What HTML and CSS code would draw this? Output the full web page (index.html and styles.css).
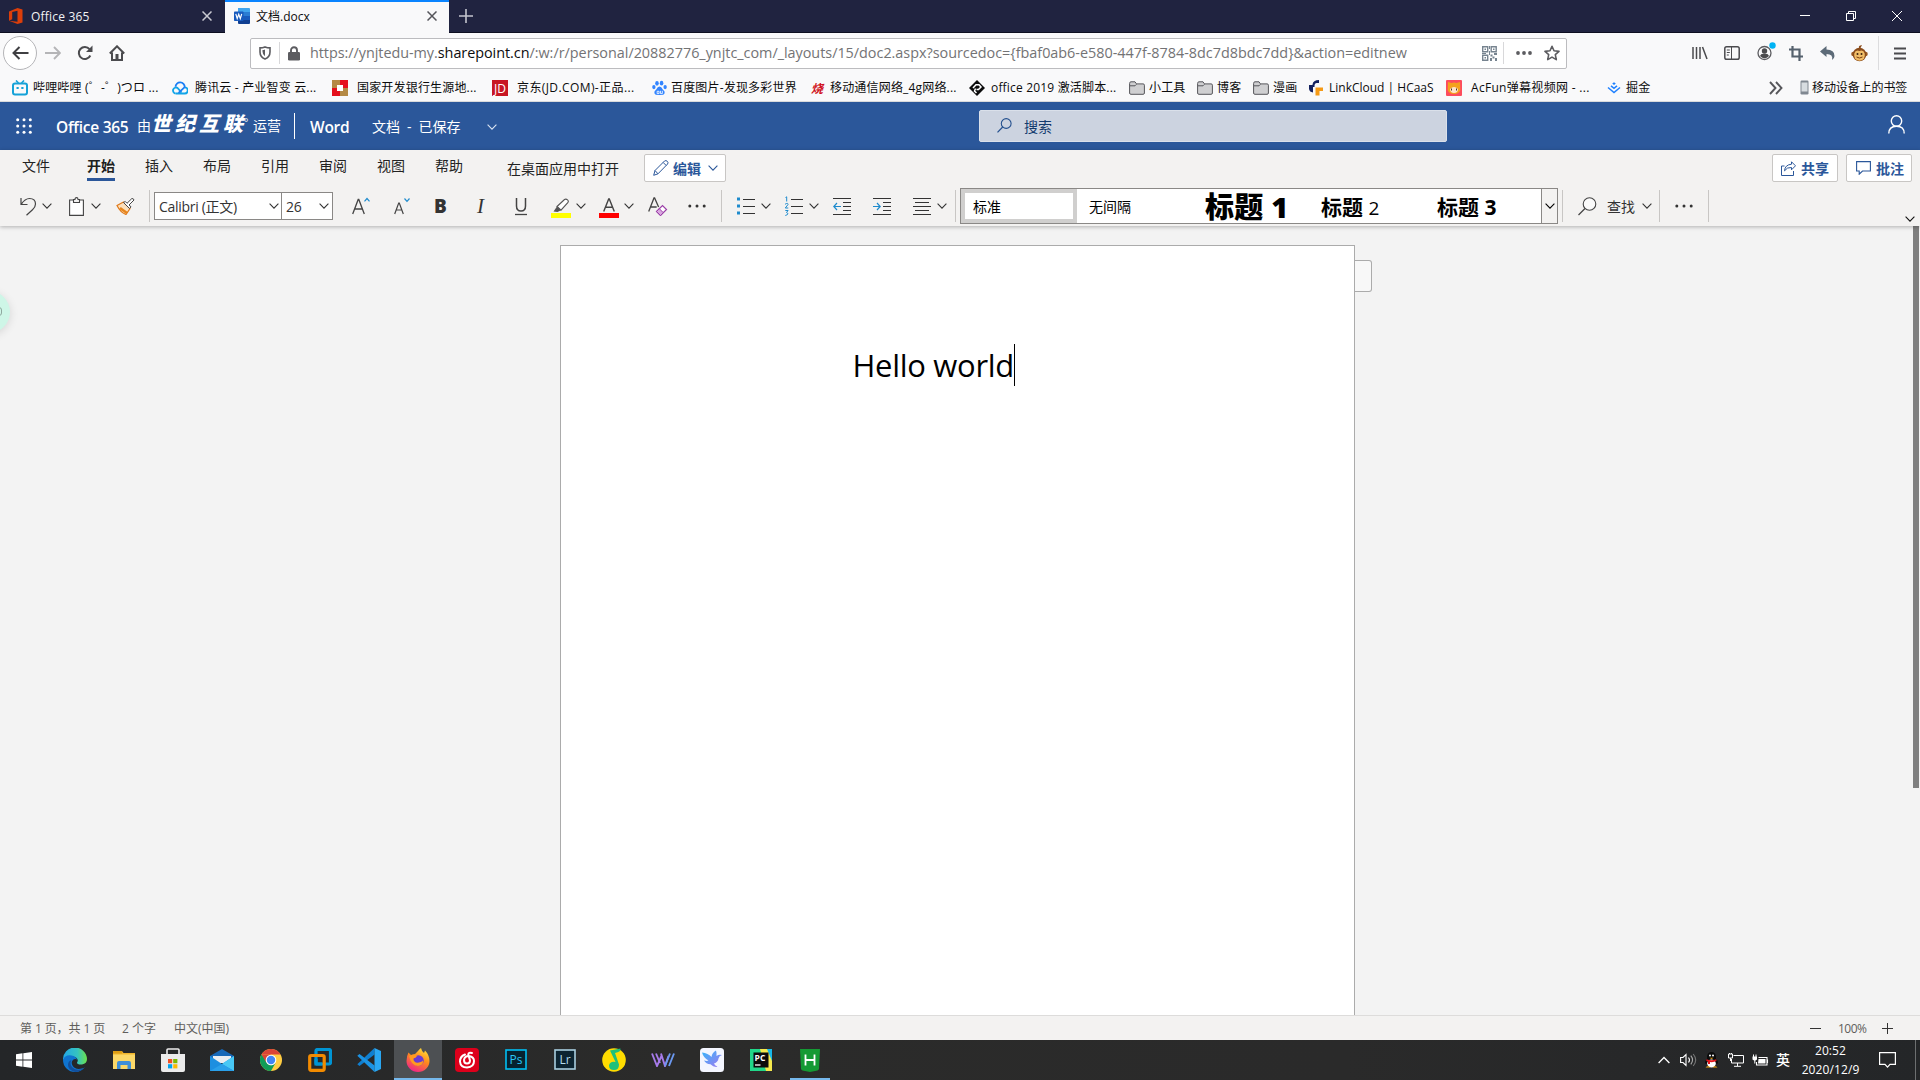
FILE: index.html
```html
<!DOCTYPE html>
<html lang="zh-CN">
<head>
<meta charset="utf-8">
<title>文档.docx</title>
<link rel="stylesheet" href="styles.css">
</head>
<body>
<svg class="defs" width="0" height="0">
  <symbol id="chev" viewBox="0 0 10 6"><path d="M.6.7 5 5.1 9.4.7" fill="none" stroke="currentColor" stroke-width="1.1"/></symbol>
  <symbol id="folder" viewBox="0 0 16 14"><path d="M.6 2.6V12q0 1.3 1.3 1.3h12.200q1.300 0 1.300-1.300V4.200q0-1.300-1.300-1.300H7.500L6 .8H1.900Q.6.800.6 2.600z" fill="#cfcfd1" stroke="#55555a"/><path d="M1 4.800h5l1.500-1.500" fill="none" stroke="#55555a"/></symbol>
  <symbol id="dots" viewBox="0 0 18 4"><circle cx="1.800" cy="2" r="1.500"/><circle cx="9" cy="2" r="1.500"/><circle cx="16.200" cy="2" r="1.500"/></symbol>
  <symbol id="x" viewBox="0 0 10 10"><path d="M.5.500l9 9m0-9-9 9" fill="none" stroke="currentColor" stroke-width="1.500"/></symbol>
</svg>

<header class="tabstrip">
  <div class="tab">
    <svg width="14" height="16" viewBox="0 0 14 16"><path d="M0 3.500 8.500 0 13.500 1.600V14.400L8.500 16 0 12.700 8.500 13.700V2.700L3.200 4v7.200L0 12.700z" fill="#dc3e0a"/></svg>
    <span class="tab-title t-office">Office 365</span>
    <svg class="close" width="10" height="10"><use href="#x"/></svg>
  </div>
  <div class="tab active">
    <svg width="16" height="16" viewBox="0 0 16 16"><path d="M4 0h11q1 0 1 1v3.500H4z" fill="#41a5ee"/><path d="M4 4h12v4H4z" fill="#2b7cd3"/><path d="M4 8h12v4H4z" fill="#185abd"/><path d="M4 12h12v3q0 1-1 1H5q-1 0-1-1z" fill="#103f91"/><rect y="3.500" width="9.500" height="9.500" rx=".8" fill="#185abd"/><path d="M1.800 5.800 3.200 10.600 4.750 6.200 6.300 10.600 7.700 5.800" fill="none" stroke="#fff" stroke-width="1.200"/></svg>
    <span class="tab-title t-doc">文档.docx</span>
    <svg class="close" width="10" height="10"><use href="#x"/></svg>
  </div>
  <svg class="newtab" width="14" height="14" viewBox="0 0 14 14"><path d="M7 0v14M0 7h14" stroke="#c4c5ce" stroke-width="1.600"/></svg>
  <div class="winctl">
    <svg width="10" height="10" viewBox="0 0 10 10"><path d="M0 4.500h10" stroke="#fff"/></svg>
    <svg width="10" height="10" viewBox="0 0 10 10"><path d="M.5 2.500h7v7h-7zM2.500 2.500v-2h7v7h-2" fill="none" stroke="#fff"/></svg>
    <svg width="10" height="10" viewBox="0 0 10 10"><path d="M0 0l10 10M10 0 0 10" stroke="#fff"/></svg>
  </div>
</header>

<nav class="navbar">
  <span class="back"><svg width="17" height="14" viewBox="0 0 17 14"><path d="M1.500 7H16.500M7.500 1 1.500 7l6 6" fill="none" stroke="#3f3f42" stroke-width="2"/></svg></span>
  <svg class="fwd" width="16" height="14" viewBox="0 0 16 14"><path d="M0 7h14.500M9 1l6 6-6 6" fill="none" stroke="#b5b5b7" stroke-width="1.900"/></svg>
  <svg class="reload" width="16" height="16" viewBox="0 0 16 16"><path d="M13.300 10.500A6 6 0 1 1 12.500 4.200" fill="none" stroke="#4b4b4e" stroke-width="2"/><path d="M15.500.500V7H9z" fill="#4b4b4e"/></svg>
  <svg class="home" width="16" height="16" viewBox="0 0 16 16"><path d="M.8 8.500 8 1.300l7.200 7.200M3 7.500V15h10V7.500" fill="none" stroke="#4b4b4e" stroke-width="2"/><path d="M6.500 9h3v6h-3z" fill="#4b4b4e"/></svg>
  <div class="urlbar">
    <svg width="12" height="14" viewBox="0 0 12 14"><path d="M6 .9q-2.500 1-5 1v4Q1 10.800 6 13q5-2.200 5-7.100v-4q-2.500 0-5-1z" fill="none" stroke="#5c5c60" stroke-width="1.600"/><path d="M6 3.500v6.800Q3.500 9 3.500 5.500V4q1.500 0 2.500-.5z" fill="#5c5c60"/></svg>
    <i class="vsep"></i>
    <svg width="12" height="15" viewBox="0 0 12 15"><rect y="6" width="12" height="8.500" rx="1.300" fill="#5c5c60"/><path d="M3 7V4.300a3 3 0 0 1 6 0V7" fill="none" stroke="#5c5c60" stroke-width="1.900"/></svg>
    <span class="url">https://ynjtedu-my.<b>sharepoint.cn</b><span class="path">/:w:/r/personal/20882776_ynjtc_com/_layouts/15/doc2.aspx?sourcedoc={fbaf0ab6-e580-447f-8784-8dc7d8bdc7dd}&amp;action=editnew</span></span>
    <svg class="qr" width="15" height="15" viewBox="0 0 15 15"><path d="M.7.700h5v5h-5zM9.200.700h5v5h-5zM.7 9.200h5v5h-5z" fill="none" stroke="#76838f" stroke-width="1.400"/><path d="M2.500 2.500h1.500v1.500H2.500zM11 2.500h1.500v1.500H11zM2.500 11h1.500v1.500H2.500zM7 0h1v3H7zM7 5h1v4H7zM0 7h4v1H0zM8.500 8.500h2v2h-2zM12 7h3v2h-3zM10.500 10.500h2v2h-2zM13 12h2v3h-2zM8 12h2v3H8z" fill="#76838f"/></svg>
    <i class="vsep"></i>
    <svg class="udots" width="16" height="4" viewBox="0 0 16 4"><g fill="#5c5c60"><circle cx="2" cy="2" r="1.900"/><circle cx="8" cy="2" r="1.900"/><circle cx="14" cy="2" r="1.900"/></g></svg>
    <svg width="16" height="16" viewBox="0 0 16 16"><path d="M8 1.300 10 5.800l5 .6-3.700 3.300 1 4.900L8 12.100l-4.300 2.500 1-4.900L1 6.400l5-.6z" fill="none" stroke="#5c5c60" stroke-width="1.600" stroke-linejoin="round"/></svg>
  </div>
  <div class="exts">
    <svg width="16" height="14" viewBox="0 0 16 14"><path d="M1 1v12M4.500 1v12M8 1v12M10.500 1l4.500 12" stroke="#4b4b4e" stroke-width="1.500"/></svg>
    <svg width="16" height="14" viewBox="0 0 16 14"><rect x=".8" y=".8" width="14.400" height="12.400" rx="1.800" fill="none" stroke="#4b4b4e" stroke-width="1.500"/><path d="M7.500 1v12M2.800 4h3M2.800 6.500h3M2.800 9h2" stroke="#4b4b4e"/></svg>
    <svg width="20" height="20" viewBox="0 0 20 20"><circle cx="7.500" cy="11" r="6.500" fill="none" stroke="#5c5c60" stroke-width="1.300"/><circle cx="7.500" cy="9" r="2.700" fill="#4b4b4e"/><path d="M3 14q1-3 4.500-2.200Q11 11 12 14q-4.500 4.500-9 0z" fill="#4b4b4e"/><circle cx="15.500" cy="3.500" r="3.200" fill="#00b3f4"/></svg>
    <svg width="14" height="15" viewBox="0 0 14 15"><path d="M3.500 0v10.500H14M0 3.500h10.500V15" fill="none" stroke="#55616d" stroke-width="2.200"/></svg>
    <svg width="16" height="14" viewBox="0 0 16 14"><path d="M0 5.500 6.500 0v3.500q8 0 8 6.500 0 2.500-2.500 4 1.500-6-5.500-6v3z" fill="#5d6b78"/></svg>
    <svg width="17" height="17" viewBox="0 0 17 17"><circle cx="2.500" cy="9" r="2.300" fill="#9a5b25"/><circle cx="14.500" cy="9" r="2.300" fill="#9a5b25"/><circle cx="8.500" cy="9.500" r="6.800" fill="#8a4b1a"/><path d="M8 3Q7 .5 11 0l-1.500 3z" fill="#8a4b1a"/><path d="M3.300 8.500Q4.500 4.500 8.500 6q4-1.500 5.200 2.500 1 6.500-5.200 7.200-6.200-.7-5.200-7.200z" fill="#f1bd67"/><circle cx="6.500" cy="9" r="1" fill="#3a220e"/><circle cx="10.500" cy="9" r="1" fill="#3a220e"/><path d="M5.500 12q3 2 6 0" fill="none" stroke="#7a3d12"/></svg>
    <i class="extsep"></i>
    <svg width="12" height="13" viewBox="0 0 12 13"><path d="M0 1.500h12M0 6.500h12M0 11.500h12" stroke="#4b4b4e" stroke-width="2"/></svg>
  </div>
</nav>

<nav class="bookmarks">
  <span class="bm"><svg width="16" height="16" viewBox="0 0 16 16"><path d="M4 .5 6.500 3M12 .5 9.500 3" stroke="#15a2d8" stroke-width="1.600"/><rect x="1" y="3.500" width="14" height="11" rx="2" fill="none" stroke="#15a2d8" stroke-width="2"/><path d="M4.500 8h2.200M9.300 8h2.200" stroke="#15a2d8" stroke-width="2"/></svg><b>哔哩哔哩 (゜-゜)つロ ...</b></span>
  <span class="bm g7"><svg width="16" height="16" viewBox="0 0 16 16"><path d="M4 13.500h8.500a3 3 0 0 0 .3-6.100M3.800 13.500a3 3 0 1 1 1.700-5.600l4 4.500" fill="none" stroke="#12a5e8" stroke-width="1.800"/><path d="M3.500 6.800a4.600 4.600 0 0 1 9.200.4L6.500 12.800" fill="none" stroke="#1b7ef5" stroke-width="1.800"/></svg><b>腾讯云 - 产业智变 云...</b></span>
  <span class="bm g9"><svg width="16" height="16" viewBox="0 0 16 16"><path d="M0 0h8v16H0z" fill="#b58a45"/><path d="M8 0h8v8H8zM0 8h8v8H0z" fill="#e50f1c"/><path d="M8 8h8v8H8z" fill="#b58a45"/><rect x="5" y="5" width="6" height="6" fill="#fff"/></svg><b>国家开发银行生源地...</b></span>
  <span class="bm g9 jd"><svg width="16" height="16" viewBox="0 0 16 16"><rect width="16" height="16" fill="#c81623"/><text x="8" y="12.500" text-anchor="middle" font-size="12" fill="#fff" textLength="12" lengthAdjust="spacingAndGlyphs">JD</text></svg><b>京东(JD.COM)-正品...</b></span>
  <span class="bm g4"><svg width="15" height="16" viewBox="0 0 16 16"><g fill="#3385ff"><ellipse cx="5.300" cy="3" rx="1.900" ry="2.500"/><ellipse cx="10.200" cy="2.800" rx="1.900" ry="2.500"/><ellipse cx="2" cy="7" rx="1.800" ry="2.300"/><ellipse cx="14" cy="7" rx="1.800" ry="2.300"/><path d="M8 6.500q2 0 3.500 3Q14 11 13.500 13.500 12.500 16 8 15.500 3.500 16 2.500 13.500 2 11 4.500 9.500q1.500-3 3.500-3z"/></g><path d="M5.500 11.500h2v2.500h-2zM9 11v3h2v-3" fill="none" stroke="#fff" stroke-width=".9"/></svg><b>百度图片-发现多彩世界</b></span>
  <span class="bm g5"><svg width="14" height="16" viewBox="0 0 14 16"><text x="0" y="12.500" font-size="12" font-style="italic" font-weight="700" fill="#d01020">烧</text></svg><b>移动通信网络_4g网络...</b></span>
  <span class="bm g6"><svg width="16" height="16" viewBox="0 0 16 16"><path d="M8 0l8 8-8 8-8-8z" fill="#0b0b0b"/><path d="M4 8l3-3.300h3L12 7 9.500 9.500H7.500M6.500 8.500l-1 2.500 2 2" fill="none" stroke="#fff" stroke-width="1.500"/></svg><b>office 2019 激活脚本...</b></span>
  <span class="bm g4"><svg width="16" height="14"><use href="#folder"/></svg><b>小工具</b></span>
  <span class="bm g4"><svg width="16" height="14"><use href="#folder"/></svg><b>博客</b></span>
  <span class="bm g4"><svg width="16" height="14"><use href="#folder"/></svg><b>漫画</b></span>
  <span class="bm g6 lc"><svg width="14" height="16" viewBox="0 0 14 16"><path d="M10 0v3H7.500Q5.500 3 5.500 5.500V7H3.500V4.500Q4 0 10 0z" fill="#14215f"/><path d="M0 5h4v7.500Q.5 12 0 9z" fill="#14215f"/><path d="M6.500 7.500H14V11h-3.500v4.500H6.500z" fill="#f59a16"/></svg><b>LinkCloud | HCaaS</b></span>
  <span class="bm g9 ac"><svg width="16" height="16" viewBox="0 0 16 16"><rect width="16" height="16" rx="1" fill="#fd4c5d"/><path d="M2 2l3.500 1q2.500-1 5 0L14 2l.3 8Q13 14 8 14T1.700 10z" fill="#f4a11d"/><path d="M4 9q4-4 8 0 0 4-4 4T4 9z" fill="#ffe5ca"/><path d="M5.500 8.500v2M10.500 8.500v2" stroke="#4b3326"/></svg><b>AcFun弹幕视频网 - ...</b></span>
  <span class="bm g5"><svg width="14" height="12" viewBox="0 0 14 12"><path d="M1 5.500l6 5 6-5M4 3.800l3 2.500 3-2.500" fill="none" stroke="#1e80ff" stroke-width="1.500"/><path d="M7 .2 8.800 1.600 7 3 5.200 1.600z" fill="#1e80ff"/></svg><b>掘金</b></span>
  <svg class="more" width="14" height="14" viewBox="0 0 14 14"><path d="M1 1l5.500 6L1 13M7 1l5.500 6L7 13" fill="none" stroke="#56565a" stroke-width="1.900"/></svg>
  <span class="bm g3"><svg width="9" height="15" viewBox="0 0 9 15"><rect x=".5" y=".5" width="8" height="14" rx="1.200" fill="#808891"/><rect x="1.500" y="2.500" width="6" height="9" fill="#d7dce0"/></svg><b>移动设备上的书签</b></span>
</nav>

<header class="suite">
  <svg class="waffle" width="16" height="16" viewBox="0 0 16 16" fill="#fff"><circle cx="1.700" cy="1.700" r="1.500"/><circle cx="8" cy="1.700" r="1.500"/><circle cx="14.300" cy="1.700" r="1.500"/><circle cx="1.700" cy="8" r="1.500"/><circle cx="8" cy="8" r="1.500"/><circle cx="14.300" cy="8" r="1.500"/><circle cx="1.700" cy="14.300" r="1.500"/><circle cx="8" cy="14.300" r="1.500"/><circle cx="14.300" cy="14.300" r="1.500"/></svg>
  <span class="brand">Office 365</span>
  <span class="by">由</span>
  <span class="vianet">世纪互联</span><span class="reg">°</span>
  <span class="by">运营</span>
  <i class="suitesep"></i>
  <span class="brand">Word</span>
  <span class="docname">文档<em>-</em>已保存</span>
  <svg class="dchev" width="10" height="6"><use href="#chev"/></svg>
  <div class="search">
    <svg width="15" height="15" viewBox="0 0 15 15"><circle cx="9.200" cy="5.500" r="4.900" fill="none" stroke="#24508e" stroke-width="1.100"/><path d="M5.700 9 .5 14.400" stroke="#24508e" stroke-width="1.200"/></svg>
    <span>搜索</span>
  </div>
  <svg class="person" width="17" height="19" viewBox="0 0 17 19"><circle cx="8.500" cy="6" r="5.200" fill="none" stroke="#fff" stroke-width="1.400"/><path d="M.8 18.500q0-7.300 7.700-7.300t7.700 7.300" fill="none" stroke="#fff" stroke-width="1.400"/></svg>
</header>

<section class="ribbon">
  <div class="menus">
    <span>文件</span><span class="on">开始</span><span>插入</span><span>布局</span><span>引用</span><span>审阅</span><span>视图</span><span>帮助</span>
    <span class="desktop">在桌面应用中打开</span>
    <button class="btn edit"><svg width="16" height="16" viewBox="0 0 16 16"><path d="M.7 15.300 2 10.500 11.500 1q1.500-1 2.800.3t.3 2.700L5 13.800zM2 10.500 5 13.800M10.200 2.500l3 3" fill="none" stroke="#2b579a"/></svg><span>编辑</span><svg width="10" height="6"><use href="#chev"/></svg></button>
    <button class="btn share"><svg width="15" height="15" viewBox="0 0 15 15"><path d="M3.500 5H.5v9.500h12V10" fill="none" stroke="#2b579a"/><path d="M10.500.800 14.500 4.800l-4 4V6.500Q6 6 3.500 9.800 4 3.800 10.500 3.200z" fill="none" stroke="#2b579a"/></svg><span>共享</span></button>
    <button class="btn note"><svg width="15" height="14" viewBox="0 0 15 14"><path d="M.6.600h13.800v9.400H6.500L3.200 13.200V10H.6z" fill="none" stroke="#2b579a" stroke-width="1.100"/></svg><span>批注</span></button>
  </div>
  <div class="tools">
    <svg width="17" height="19" viewBox="0 0 17 19"><path d="M1 1v6.500h6.500M1.200 7.300Q5 1.500 9.500 1.500q6 0 6 5.500 0 3-3 5.700L6.500 18.300" fill="none" stroke="#444" stroke-width="1.200"/></svg>
    <svg class="dd" width="10" height="6"><use href="#chev"/></svg>
    <svg width="15" height="19" viewBox="0 0 15 19"><path d="M4.500 3H.6v15.400h13.800V3h-3.900M4.500 4.500V2.500h1.500Q6 .6 7.500.6T9 2.500h1.500v3h-6z" fill="#fff" stroke="#444" stroke-width="1.100"/></svg>
    <svg width="10" height="6"><use href="#chev"/></svg>
    <svg width="19" height="17" viewBox="0 0 19 17"><path d="M1 7.500 7.500 4l6.500 6.500-4 6Q4.500 14.500 1 7.500z" fill="#fbe0bd" stroke="#e0791a" stroke-width="1.200"/><path d="M4 10l7 5" stroke="#e8861c" stroke-width="2.500"/><path d="M7.500 4.500 13.500 10.500 15 8.800 13 7l5-5q-.5-1.800-2.200-1.400L11 5.300 9.300 3.500z" fill="#fff" stroke="#444"/></svg>
    <i class="rsep"></i>
    <div class="fontbox"><span class="fname">Calibri (正文)</span><svg width="10" height="6"><use href="#chev"/></svg><span class="fsize">26</span><svg width="10" height="6"><use href="#chev"/></svg></div>
    <svg class="grow" width="18" height="18" viewBox="0 0 18 18"><path d="M.7 17 6.200 2.500h.6L12.300 17M2.600 12h7.800" fill="none" stroke="#444" stroke-width="1.300"/><path d="M12.500 4.300 15 1.500l2.500 2.800" fill="none" stroke="#1e8bcd" stroke-width="1.200"/></svg>
    <svg class="grow" width="16" height="18" viewBox="0 0 16 18"><path d="M.7 17 4.700 6h.6l4 11M2.200 13h5.600" fill="none" stroke="#444" stroke-width="1.200"/><path d="M10.500 1.500 13 4.300l2.500-2.800" fill="none" stroke="#1e8bcd" stroke-width="1.200"/></svg>
    <span class="ltr bold">B</span>
    <span class="ltr ital">I</span>
    <svg width="12" height="19" viewBox="0 0 12 19"><path d="M1.500 1v8q0 5 4.500 5t4.500-5V1" fill="none" stroke="#444" stroke-width="1.500"/><path d="M0 17.500h12" stroke="#444" stroke-width="1.300"/></svg>
    <svg class="hl" width="20" height="20" viewBox="0 0 20 20"><path d="M0 15h20v5H0z" fill="#ff0"/><path d="M6 8.500 13.500 1.500q1.500-1 3 .3t.3 2.900L10 12.200z" fill="#fff" stroke="#555" stroke-width="1.100"/><path d="M2.500 13.500 6 8.500l4 3.700-3.500 1.800z" fill="#555"/></svg>
    <svg width="10" height="6"><use href="#chev"/></svg>
    <svg class="hl" width="20" height="20" viewBox="0 0 20 20"><path d="M0 15h20v5H0z" fill="#f00"/><path d="M4.700 13.500 9.700 1h.6l5 12.500M6.500 9.300h7" fill="none" stroke="#444" stroke-width="1.400"/></svg>
    <svg width="10" height="6"><use href="#chev"/></svg>
    <svg width="20" height="20" viewBox="0 0 20 20"><path d="M.7 15.500 6 2h.6l4 9M2.700 11h6" fill="none" stroke="#444" stroke-width="1.300"/><path d="M8.500 15.500 14.500 9.500l4 4-6 6z" fill="#fff" stroke="#9b3fa8" stroke-width="1.200"/><path d="M8.500 15.500l2.800-2.800 4 4-2.800 2.800z" fill="#d9a7df" stroke="#9b3fa8"/></svg>
    <svg width="18" height="4" fill="#333"><use href="#dots"/></svg>
    <i class="rsep"></i>
    <svg width="18" height="18" viewBox="0 0 18 18"><path d="M0 .5h3v3H0zM0 7.500h3v3H0zM0 14.500h3v3H0z" fill="#1e8bcd"/><path d="M6 2.500h12M6 9.500h12M6 16.500h12" stroke="#333"/></svg>
    <svg class="dd" width="10" height="6"><use href="#chev"/></svg>
    <svg width="18" height="20" viewBox="0 0 18 20"><path d="M6 3.500h12M6 10.500h12M6 17.500h12" stroke="#333"/><path d="M.5 1.500 1.700.8V5.500M0 8.300q3-2 3 .2L.3 12H3.300M.3 14.500h2.800L1.500 16.500q3.500 1.500-1.200 3" fill="none" stroke="#1e8bcd"/></svg>
    <svg class="dd" width="10" height="6"><use href="#chev"/></svg>
    <svg width="18" height="18" viewBox="0 0 18 18"><path d="M0 1.500h18M10 5.500h8M10 9.500h8M10 13.500h8M0 17.500h18" stroke="#333"/><path d="M8 9.500H1M4 6 .8 9.500 4 13" fill="none" stroke="#1e8bcd" stroke-width="1.200"/></svg>
    <svg width="18" height="18" viewBox="0 0 18 18"><path d="M0 1.500h18M10 5.500h8M10 9.500h8M10 13.500h8M0 17.500h18" stroke="#333"/><path d="M0 9.500h7M4 6l3.200 3.500L4 13" fill="none" stroke="#1e8bcd" stroke-width="1.200"/></svg>
    <svg width="18" height="18" viewBox="0 0 18 18"><path d="M0 1.500h18M2 5.500h14M0 9.500h18M2 13.500h14M0 17.500h18" stroke="#333"/></svg>
    <svg class="dd" width="10" height="6"><use href="#chev"/></svg>
    <i class="rsep"></i>
    <div class="gallery">
      <span class="style sel"><b>标准</b></span>
      <span class="style">无间隔</span>
      <span class="style h1">标题 1</span>
      <span class="style h2">标题 <b>2</b></span>
      <span class="style h3">标题 3</span>
      <span class="drop"><svg width="10" height="6"><use href="#chev"/></svg></span>
    </div>
    <i class="rsep"></i>
    <svg width="19" height="19" viewBox="0 0 19 19"><circle cx="11.500" cy="7" r="6.300" fill="#fafafa" stroke="#444" stroke-width="1.100"/><path d="M7 11.500.5 18" stroke="#444" stroke-width="1.200"/></svg>
    <span class="find">查找</span>
    <svg width="10" height="6"><use href="#chev"/></svg>
    <i class="rsep"></i>
    <svg width="18" height="4" fill="#333"><use href="#dots"/></svg>
    <i class="rsep"></i>
    <svg class="collapse" width="10" height="6"><use href="#chev"/></svg>
  </div>
</section>

<main class="canvas">
  <article class="page"><p>Hello world<i class="caret"></i></p></article>
  <div class="margintab"></div>
  <div class="scrollbar"></div>
  <div class="bubble"><span></span></div>
</main>

<footer class="status">
  <span class="s-page">第 1 页，共 1 页</span><span class="s-words">2 个字</span><span class="s-lang">中文(中国)</span>
  <svg width="11" height="11" viewBox="0 0 11 11"><path d="M0 5.500h11" stroke="#333"/></svg>
  <span class="s-zoom">100%</span>
  <svg width="11" height="11" viewBox="0 0 11 11"><path d="M0 5.500h11M5.500 0v11" stroke="#333"/></svg>
</footer>

<footer class="taskbar">
  <span class="start"><svg width="16" height="16" viewBox="0 0 16 16" fill="#fff"><path d="M0 2.200 6.500 1.300v6.200H0zM7.300 1.200 16 0v7.500H7.300zM0 8.400h6.500v6.300L0 13.800zM7.300 8.400H16V16l-8.700-1.200z"/></svg></span>
  <span class="app"><svg width="24" height="24" viewBox="0 0 24 24"><defs><linearGradient id="e1" x1="0" x2="1"><stop offset="0" stop-color="#22a7e8"/><stop offset=".6" stop-color="#35c3c0"/><stop offset="1" stop-color="#6be34b"/></linearGradient></defs><path d="M0 12A12 12 0 0 1 24 11q0 4.500-5 5.500-5 .3-5-2Q16 12 13 9.500 8 6.500 0 12z" fill="url(#e1)"/><path d="M0 12Q2 6.500 8.500 7.500q4.500.5 5.500 4.500-1-1.500-3.500-.5-3 2-1 6Q12 22 19 20.500q2-.5 3-1.500-4 5-10 5A12 12 0 0 1 0 12z" fill="#0f74d0"/><path d="M8.500 12q-2.500 4 1 7.500t10 1.500l2.500-2q-4 5-10 5-7-2-7-7 0-4 3.500-5z" fill="#124f9c"/></svg></span>
  <span class="app"><svg width="22" height="18" viewBox="0 0 22 18"><path d="M0 0h9l1.500 2H22v16H0z" fill="#f0b52c"/><path d="M0 3.500h22V18H0z" fill="#fbd868"/><path d="M0 0h9v2.500H0z" fill="#dd9d14"/><path d="M4 18v-6q0-2 2-2h10q2 0 2 2v6h-3.500v-4h-7v4z" fill="#3f8fd8"/></svg></span>
  <span class="app"><svg width="24" height="24" viewBox="0 0 24 24"><path d="M6 7V2q0-1 1-1h10q1 0 1 1v5" fill="none" stroke="#ededed" stroke-width="1.600"/><path d="M0 6h24v16q0 2-2 2H2q-2 0-2-2z" fill="#ebebeb"/><path d="M7 11h4.200v4.200H7z" fill="#f04f23"/><path d="M12.200 11h4.200v4.200h-4.200z" fill="#7cba00"/><path d="M7 16.200h4.200v4.200H7z" fill="#00a3ee"/><path d="M12.200 16.200h4.200v4.200h-4.200z" fill="#feb800"/></svg></span>
  <span class="app"><svg width="24" height="22" viewBox="0 0 24 22"><path d="M0 7 12 0l12 7v3H0z" fill="#1668b8"/><path d="M3 7h18v7H3z" fill="#e9edf1"/><path d="M0 7l12 8 12-8v15H0z" fill="#1d8fe0"/><path d="M24 7 12 15l12 7z" fill="#48c8f5"/><path d="M0 22l12-7 12 7z" fill="#2aa0ea"/></svg></span>
  <span class="app"><svg width="22" height="22" viewBox="0 0 24 24"><circle cx="12" cy="12" r="12" fill="#ffcd42"/><path d="M1.600 6A12 12 0 0 1 22.400 6H12z" fill="#db4437"/><path d="M1.600 6A12 12 0 0 0 12 24l5-9-5 3z" fill="#0f9d58"/><path d="M1.600 6 7 15l5-9z" fill="#db4437"/><circle cx="12" cy="12" r="5.800" fill="#fff"/><circle cx="12" cy="12" r="4.600" fill="#4285f4"/></svg></span>
  <span class="app"><svg width="24" height="24" viewBox="0 0 24 24"><rect x="8" y="1.500" width="14.500" height="14.500" rx="1.500" fill="none" stroke="#0095d5" stroke-width="3.200"/><rect x="1.700" y="7.500" width="14.500" height="14.800" rx="1.500" fill="none" stroke="#f38b00" stroke-width="3.200"/><path d="M8 11v5h6" fill="none" stroke="#0095d5" stroke-width="3.200"/></svg></span>
  <span class="app"><svg width="24" height="24" viewBox="0 0 24 24"><path d="M17.500 6.500 2.500 18 .3 16.200 17.500 0z" fill="#0f7fd0"/><path d="M17.500 17.500 2.500 6 .3 7.800 17.500 24z" fill="#1b93e4"/><path d="M17.500 0 24 3v18l-6.500 3z" fill="#2aa7f2"/></svg></span>
  <span class="app active"><svg width="24" height="24" viewBox="0 0 24 24"><defs><linearGradient id="ff" x1=".8" y1="0" x2=".3" y2="1"><stop offset="0" stop-color="#ffe33a"/><stop offset=".45" stop-color="#ff8a1c"/><stop offset="1" stop-color="#f0218a"/></linearGradient></defs><path d="M2.500 4.500 5 7l4-1 3-3Q13.500 1 15 0q.5 3 3 5l1-2.500Q23.500 7 23.500 13A11.500 11 0 0 1 .5 13Q.5 8 2.500 4.500z" fill="url(#ff)"/><circle cx="12.500" cy="12.500" r="5.200" fill="#6a3bd0"/><path d="M3 8q5-3 8 0-1 2-4 2.500 1 5 6 4 3-.5 4-2 .5 5-5 5.500-7-.5-9-10z" fill="#ff9a1f"/></svg></span>
  <span class="app"><svg width="24" height="24" viewBox="0 0 24 24"><rect width="24" height="24" rx="4" fill="#dd001b"/><path d="M10 6.500Q5 8.500 5 13.500q.5 6 7 6 7-.5 7-6.500 0-4-5-5-4.500 0-5 4 0 3.500 3 3.500t3-3L13.300 6.500q0-2.500 3.700-1.500" fill="none" stroke="#fff" stroke-width="2" stroke-linecap="round"/></svg></span>
  <span class="app up"><svg width="22" height="21" viewBox="0 0 22 21"><rect x="1" y="1" width="20" height="19" fill="#06222f" stroke="#00bff3" stroke-width="1.600"/><text x="11" y="15" text-anchor="middle" font-size="12" fill="#2bc6f5">Ps</text></svg></span>
  <span class="app up"><svg width="22" height="21" viewBox="0 0 22 21"><rect x="1" y="1" width="20" height="19" fill="#0c2431" stroke="#a9cfe0" stroke-width="1.600"/><text x="11" y="15" text-anchor="middle" font-size="12" fill="#b5dcec">Lr</text></svg></span>
  <span class="app"><svg width="24" height="24" viewBox="0 0 24 24"><circle cx="12" cy="12" r="11.800" fill="#ffdc00"/><path d="M8 2.500 18.500.500Q19 4 13 5l4 11.500q0 5.500-5 5.500t-5-4.500q1-4.500 6.500-3.500z" fill="#1fc07a"/></svg></span>
  <span class="app"><svg width="24" height="14" viewBox="0 0 24 14"><path d="M1 .5 6 13l4.500-10M5 .5 9 10M10 .5 14 13 17.500 3" fill="none" stroke="#a77bea" stroke-width="1.900"/><path d="M14 13 19 .5M18 13 23 .5" fill="none" stroke="#6b98f0" stroke-width="1.900"/></svg></span>
  <span class="app"><svg width="24" height="24" viewBox="0 0 24 24"><defs><linearGradient id="bd" x1="0" x2="1" y2="1"><stop offset="0" stop-color="#35b5fa"/><stop offset="1" stop-color="#a478f0"/></linearGradient></defs><rect width="24" height="24" rx="3.500" fill="#f4f6ff"/><path d="M2 4.500q6 .8 9.500 4.500Q12 4.500 16 2.500 17 5.500 16.500 8 19 6 22 7q-3 .8-3.500 3.500-.5 3.500-4.500 5 .5 2 3.500 3.300-4 .7-7-2.500Q6 16 4 12.500q3 .8 4.500 0Q3.500 10 2 4.500z" fill="url(#bd)"/></svg></span>
  <span class="app"><svg width="22" height="22" viewBox="0 0 22 22"><path d="M0 0h22v22H0z" fill="#21d789"/><path d="M10 0h12v22h-6z" fill="#f5e94d"/><path d="M17 0h5v12z" fill="#18b8e8"/><rect x="3.500" y="3.500" width="15" height="15" fill="#0b0b0b"/><text x="4.600" y="11.500" font-size="8.500" font-weight="700" fill="#fff">PC</text><path d="M5 16h5.500" stroke="#fff" stroke-width="1.300"/></svg></span>
  <span class="app running"><svg width="22" height="23" viewBox="0 0 22 23"><path d="M1 0h20l-1 20q-.2 1-1.500 1.400L11 23l-7.500-1.600Q2.200 21 2 20z" fill="#159a34"/><path d="M6.500 5.500v11M15.500 5.500v11M6.500 11h9" stroke="#fff" stroke-width="1.800"/></svg></span>
  <div class="tray">
    <svg width="12" height="8" viewBox="0 0 12 8"><path d="M.6 7 6 1.500 11.400 7" fill="none" stroke="#fff" stroke-width="1.300"/></svg>
    <svg width="17" height="14" viewBox="0 0 17 14"><path d="M.6 4.500H3l3-3v11l-3-3H.6zM8.500 4.500q2 2.500 0 5" fill="none" stroke="#fff" stroke-width="1.100"/><path d="M10.800 2.700q3.500 4.300 0 8.600" fill="none" stroke="#aaa" stroke-width="1.100"/><path d="M13.200 1q5 6 0 12" fill="none" stroke="#777" stroke-width="1.100"/></svg>
    <svg width="15" height="16" viewBox="0 0 15 16"><path d="M1 11Q1 8 3 7q-.5-7 4.500-7T12 7q2 1 2 4l-1 1-2-1v4H4v-4l-2 1z" fill="#0b0b0b"/><ellipse cx="7.500" cy="11.500" rx="4.300" ry="4" fill="#fff"/><circle cx="6" cy="3.500" r="1" fill="#fff"/><circle cx="9" cy="3.500" r="1" fill="#fff"/><path d="M5.500 5.700h4L7.500 7zM1.500 15.500q2.500-2.500 5 0zM8.500 15.500q2.500-2.500 5 0z" fill="#f5a60f"/><path d="M2.500 7.200q5 2.300 9.700 0l.3 1.800q-3 1.500-6.500 1V12H4V9.500L2.300 9z" fill="#e0161b"/></svg>
    <svg width="16" height="14" viewBox="0 0 16 14"><path d="M5.500 2.500h10v7.500H3.500V6M9.500 10v3M6 13.300h7M.5 1v4h4V1zM1.500 0v1M3.500 0v1M2.500 5v3" fill="none" stroke="#fff"/></svg>
    <svg width="17" height="13" viewBox="0 0 17 13"><path d="M6.500 3.500h8.500v7.500H4.500V8M15.500 5.500v3.500" fill="none" stroke="#fff" stroke-width="1.100"/><path d="M6.500 5h7v4.500H6zM.5 2.500h4.500v3l-1.500 1h-1.500l-1.500-1zM1 .500h1V3H1zM3.500.500h1V3h-1zM2.300 6h1v3.500h-1z" fill="#fff"/></svg>
    <span class="ime">英</span>
    <div class="clock"><span>20:52</span><span>2020/12/9</span></div>
    <svg width="17" height="17" viewBox="0 0 17 17"><path d="M.6.600h15.800v11.800H11L8.500 15.200 6 12.400H.6z" fill="none" stroke="#fff" stroke-width="1.200"/></svg>
    <i class="peek"></i>
  </div>
</footer>
</body>
</html>
```
FILE: styles.css
```css
* { box-sizing: border-box; }
html, body { margin: 0; height: 100%; }
body {
  width: 1920px; height: 1080px; overflow: hidden;
  display: flex; flex-direction: column;
  font-family: "Open Sans", "Noto Sans CJK SC", sans-serif;
  font-size: 14px; line-height: 20px; color: #222; white-space: nowrap;
  background: #f3f3f3;
}
svg { display: block; flex: none; }
.defs { position: absolute; }
i, em { font-style: normal; }
span, i { flex: none; }

/* browser tabs */
.tabstrip { flex: none; height: 33px; background: #202340; border-bottom: 1px solid #0d0e20; display: flex; align-items: center; }
.tab { width: 225px; height: 33px; display: flex; align-items: center; padding: 0 13px 0 9px; color: #f3f3f5; font-size: 12px; }
.tab.active { width: 224px; background: #f9f9fa; border-top: 2px solid #0a84ff; color: #0c0c0d; padding-bottom: 2px; }
.tab-title { margin-left: 8px; padding-top: 1px; }
.t-office { letter-spacing: .2px; }
.t-doc { margin-left: 6px; }
.close { margin-left: auto; color: #c9cad2; }
.active .close { color: #55555a; margin-right: -1px; }
.newtab { margin-left: 10px; }
.winctl { margin-left: auto; display: flex; gap: 36px; padding-right: 18px; }

/* address row */
.navbar { flex: none; height: 41px; background: #f9f9fa; display: flex; align-items: center; padding-bottom: 1px; }
.back { width: 34px; height: 34px; margin-left: 3px; border: 1px solid #b5b5b8; border-radius: 50%; background: #fff; display: flex; align-items: center; justify-content: center; }
.fwd { margin-left: 8px; }
.reload { margin-left: 16px; }
.home { margin-left: 16px; }
.urlbar { width: 1317px; height: 31px; margin-left: 125px; border: 1px solid #bcbcbf; border-radius: 2px; background: #fff; display: flex; align-items: center; padding-left: 8px; }
.vsep { width: 1px; height: 22px; background: #d8d8da; margin: 0 8px; }
.url { width: 1172px; margin-left: 10px; font-size: 14.400px; color: #737375; letter-spacing: -.04px; padding-bottom: 1px; }
.url b { font-weight: 400; color: #0c0c0d; }
.path { letter-spacing: -.015px; }
.urlbar .vsep:nth-of-type(2) { margin: 0 12px 0 6px; }
.udots { margin-right: 12px; }
.exts { flex: 1; display: grid; align-items: center; padding-left: 125px; grid-template-columns: 32px 33px 32px 31px 31px 27px 16px 12px; }
.exts svg:nth-child(3) { margin-top: -2px; }
.extsep { width: 1px; height: 34px; background: #dcdcde; }

/* bookmarks */
.bookmarks { flex: none; height: 28px; background: #f9f9fa; border-bottom: 1px solid #dadadb; padding: 0 0 0 12px; align-items: center; font-size: 12px; color: #0c0c0d;
  display: grid; grid-template-columns: 160px 160px 160px 160px 159px 158px 160px 68px 56px 56px 137px 161px 162px 31px 120px; }
.bm { display: flex; align-items: center; min-width: 0; }
.bm b { font-weight: 400; margin-left: 5px; letter-spacing: .18px; }
.bm.jd b { letter-spacing: .4px; }
.bm.lc b { letter-spacing: 0; }
.bm.ac b { letter-spacing: .3px; }
.bm.g3 b { margin-left: 3px; letter-spacing: -.1px; }
.g4 b { margin-left: 4px; }
.g6 b { margin-left: 6px; }
.g7 b { margin-left: 7px; }
.g9 b { margin-left: 9px; }

/* Office header */
.suite { flex: none; height: 48px; background: #2b579a; color: #fff; display: flex; align-items: center; padding-left: 16px; }
.brand { width: 81px; margin-left: 24px; font-size: 15.500px; font-weight: 600; padding-top: 2px; letter-spacing: -.25px; }
.by { width: 15px; }
.vianet { width: 93px; font-size: 20px; font-weight: 900; font-style: italic; letter-spacing: 4px; padding-bottom: 5px; margin-left: -1px; }
.reg { width: 9px; font-size: 10px; padding-bottom: 8px; }
.reg + .by { width: 41px; }
.suitesep { width: 1px; height: 26px; background: #fff; }
.suitesep + .brand { width: 62px; margin-left: 15px; }
.docname { width: 115px; padding-top: 1px; }
.docname em { margin: 0 7px; }
.dchev { color: #dbe4f2; margin-top: 2px; }
.search { width: 468px; height: 32px; margin-left: 482px; background: #ccd3e0; border: 1px solid #dae0ea; border-radius: 2px; display: flex; align-items: center; color: #133a6e; padding-left: 17px; }
.search span { margin-left: 12px; padding-top: 2px; }
.search svg { margin-top: -2px; }
.person { margin-left: 441px; margin-top: -3px; }

/* ribbon */
.ribbon { flex: none; height: 76px; background: #f3f2f1; box-shadow: 0 1px 4px rgba(0,0,0,.28); position: relative; z-index: 1; }
.menus { height: 38px; display: flex; align-items: flex-start; padding: 4px 8px 0 22px; }
.menus > span { width: 28px; height: 27px; margin-right: 30px; padding-top: 2px; }
.menus > .on { font-weight: 700; border-bottom: 3px solid #2b579a; margin-left: 7px; color: #201f1e; }
.menus > .desktop { width: 112px; margin: 3px 25px 0 14px; }
.btn { height: 28px; border: 1px solid #c8c6c4; border-radius: 2px; background: #fff; display: flex; align-items: center; padding: 0 0 0 8px; color: #2b579a; font: 600 14px/20px "Open Sans", "Noto Sans CJK SC", sans-serif; }
.btn span { margin: 1px 7px 0 4px; font-weight: 600; }
.edit { width: 82px; }
.share { width: 66px; margin-left: auto; }
.note { width: 66px; margin-left: 8px; padding-left: 9px; }
.share span, .note span { margin: 2px 0 0 5px; }
.tools { height: 38px; padding: 0 0 3px 20px; display: grid; align-items: center; justify-items: start; color: #333;
  grid-template-columns: 23px 26px 22px 25px 33px 5px 199px 42px 41px 41px 38px 36px 25px 23px 25px 24px 40px 33px 16px 25px 23px 25px 23px 40px 40px 25px 17px 5px 602px 16px 29px 35px 17px 16px 33px 197px 10px; }
.rsep { width: 1px; height: 32px; background: #c8c6c4; }
.dd { margin-left: -1px; }
.grow { margin-left: -1px; }
.hl { margin-top: 4px; }
.fontbox { width: 179px; height: 28px; border: 1px solid #8a8886; background: #fff; display: grid; grid-template-columns: 114px 12px 38px 14px; align-items: center; }
.fname { padding: 2px 0 0 4px; letter-spacing: -.3px; }
.fsize { border-left: 1px solid #8a8886; height: 26px; padding: 4px 0 0 4px; letter-spacing: -.3px; }
.ltr { font-size: 20px; color: #333; }
.bold { font-weight: 800; font-size: 19px; margin-left: -2px; }
.ital { font: italic 21px "Liberation Serif", serif; }
.gallery { width: 598px; height: 36px; border: 1px solid #8a8886; background: #fff; display: grid; grid-template-columns: 116px 116px 116px 116px 116px 16px; align-items: center; color: #000; }
.style { padding: 3px 0 0 12px; height: 34px; line-height: 30px; }
.sel { border: 4px solid #d0cfce; padding: 0 0 0 8px; line-height: 28px; }
.sel b { font-weight: 400; }
.h1 { font-size: 29px; font-weight: 800; letter-spacing: .2px; }
.h2 { font-size: 21px; font-weight: 700; }
.h2 b { font-weight: 400; font-size: 19px; }
.h3 { font-size: 21px; font-weight: 700; }
.drop { height: 34px; border-left: 1px solid #8a8886; background: #f3f2f1; display: flex; align-items: center; padding-left: 3px; }
.find { padding-top: 2px; }
.collapse { align-self: end; margin: 0 0 2px; color: #111; }

/* document */
.canvas { flex: 1; min-height: 0; overflow: hidden; position: relative; display: flex; align-items: flex-start; padding: 19px 0 0 560px; background: #f3f3f3; }
.page { width: 795px; height: 1123px; background: #fff; border: 1px solid #ababab; padding: 96px 0 0 291.500px; }
.page p { margin: 0; display: flex; align-items: center; font-size: 31px; line-height: 46px; color: #000; letter-spacing: -.3px; }
.caret { width: 1px; height: 42px; background: #000; }
.margintab { width: 17px; height: 32px; margin-top: 15px; border: 1px solid #ababab; border-left: 0; border-radius: 0 3px 3px 0; background: #f8f8f8; }
.scrollbar { position: absolute; right: 1px; top: 0; width: 6px; height: 562px; background: #7f7f7f; }
.bubble { position: absolute; left: -32px; top: 65px; width: 42px; height: 42px; border-radius: 50%; background: #cef6e7; box-shadow: 0 2px 10px rgba(0,0,0,.12); }
.bubble span { position: absolute; right: 8px; top: 16px; width: 9px; height: 9px; border: 1.500px solid #8fa89f; border-radius: 3px; }

/* status bar */
.status { flex: none; height: 25px; background: #f3f2f1; border-top: 1px solid #dddcdb; display: flex; align-items: center; padding-left: 20px; font-size: 12px; color: #605e5c; }
.status span { padding-top: 1px; }
.s-page { width: 102px; letter-spacing: -.1px; }
.s-words { width: 52px; }
.s-lang { flex: 1; }
.status .s-zoom { width: 61px; padding-left: 17px; letter-spacing: -.5px; }
.status svg:last-child { margin-right: 27px; }

/* taskbar */
.taskbar { flex: none; height: 40px; background: linear-gradient(90deg, #242628, #2b2b2a 35%, #2a2a2a 70%, #242628); display: flex; }
.start { width: 51px; display: flex; align-items: center; padding-left: 16px; }
.app { width: 48px; margin-right: 1px; display: flex; align-items: center; justify-content: center; position: relative; }
.app.up { padding-bottom: 2px; }
.app.active { background: #4d5053; border-bottom: 2px solid #76b9ed; padding-top: 1px; }
.running::after { content: ""; position: absolute; left: 4px; right: 4px; bottom: 0; height: 2px; background: #76b9ed; }
.tray { margin-left: auto; width: 262px; display: grid; align-items: center; color: #fff; grid-template-columns: 22px 24px 24px 24px 24px 22px 81px 36px 5px; }
.ime { font-size: 14px; font-weight: 500; }
.clock { display: flex; flex-direction: column; align-items: center; font-size: 12px; line-height: 19px; padding-right: 16px; letter-spacing: .1px; }
.peek { width: 1px; height: 40px; background: #6d6f70; }
```
